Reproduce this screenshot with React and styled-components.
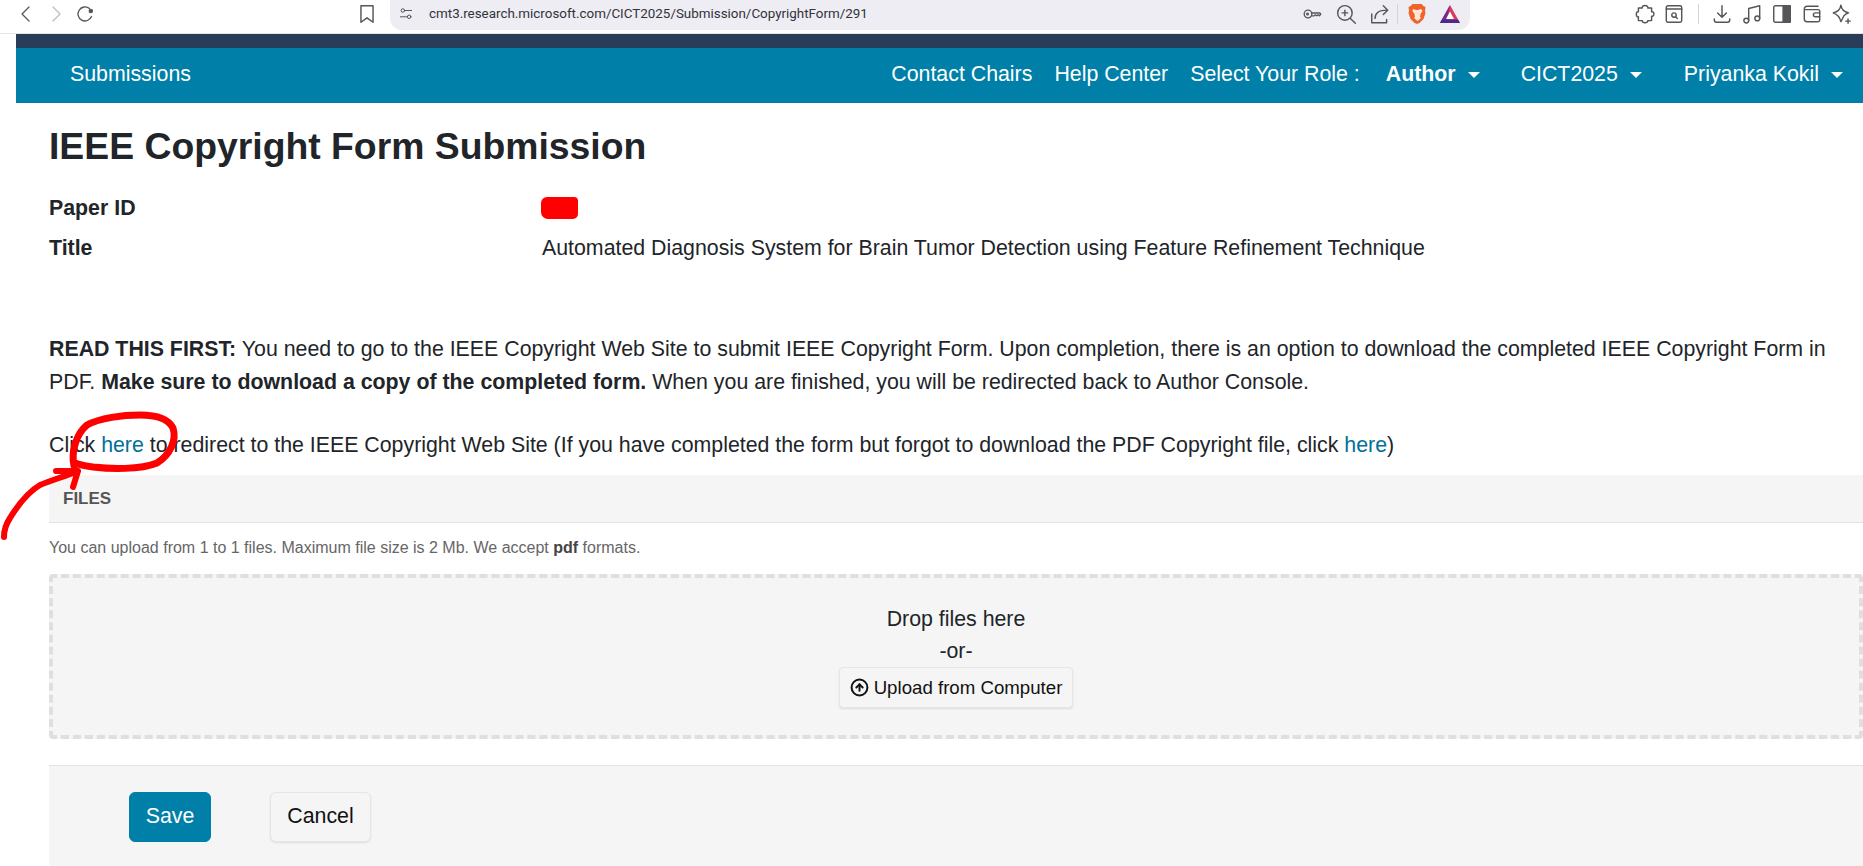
import styled, { createGlobalStyle } from 'styled-components';
import { CircleArrowUp } from 'lucide-react';

const GlobalStyle = createGlobalStyle`
  html, body {
    margin: 0;
    height: 866px;
    overflow: hidden;
    background: #fff;
    font-family: "Liberation Sans", Arial, sans-serif;
    color: #212529;
  }
`;

const Page = styled.div`
  position: relative;
  width: 1863px;
  height: 866px;
  overflow: hidden;
`;

// Browser chrome
const Toolbar = styled.div`
  height: 34px;
  display: flex;
  align-items: flex-start;
  padding-left: 11px;
  box-sizing: border-box;
  border-bottom: 1px solid #e4e4e7;
`;

const ToolIcon = styled.span`
  width: 30px;
  height: 28px;
  margin-left: ${({ $ml }) => $ml || 0}px;
  flex: none;
  display: flex;
  align-items: center;
  justify-content: center;
  color: ${({ $faded }) => ($faded ? '#bdbdc0' : '#55555a')};
`;

const Glyph = styled.svg.attrs({ viewBox: '0 0 20 20' })`
  width: ${({ $size }) => $size || 20}px;
  height: ${({ $size }) => $size || 20}px;
  fill: none;
  stroke: currentColor;
  stroke-width: 1.3;
  stroke-linecap: round;
  stroke-linejoin: round;
`;

const UrlBar = styled.div`
  width: 1080px;
  height: 30px;
  margin-left: 8px;
  padding-left: 9px;
  box-sizing: border-box;
  flex: none;
  display: flex;
  align-items: flex-start;
  background: #ededf3;
  border-radius: 0 0 12px 12px;
`;

const TuneBox = styled.span`
  width: 14px;
  height: 28px;
  flex: none;
  display: flex;
  align-items: center;
  color: #44444a;
`;

const UrlText = styled.span`
  font-family: "Roboto", "Liberation Sans", sans-serif;
  font-size: 13.4px;
  line-height: 28px;
  color: #33333a;
  margin-left: 16px;
  width: 611px;
  flex: none;
`;

const Divider = styled.span`
  width: 1px;
  height: 20px;
  margin: 4px ${({ $mr }) => $mr || 0}px 0 ${({ $ml }) => $ml || 0}px;
  background: #d4d4d8;
  flex: none;
`;

const ExtIcons = styled.div`
  margin-left: 160px;
  display: flex;
  align-items: flex-start;
`;

// Site navigation
const TopStrip = styled.div`
  height: 14px;
  margin-left: 16px;
  background: #293d58;
`;

const NavBar = styled.nav`
  height: 55px;
  margin-left: 16px;
  padding: 0 20px 2px 54px;
  box-sizing: border-box;
  display: flex;
  align-items: center;
  justify-content: space-between;
  background: #0080a8;
  color: #fff;
  font-size: 21.33px;
`;

const NavGroup = styled.div`
  display: flex;
  align-items: center;
`;

const NavItem = styled.span`
  margin-left: ${({ $ml }) => $ml || 0}px;
  font-weight: ${({ $bold }) => ($bold ? 700 : 400)};
  white-space: nowrap;
`;

const Caret = styled.span`
  display: inline-block;
  margin-left: 12px;
  border-left: 6px solid transparent;
  border-right: 6px solid transparent;
  border-top: 6px solid #fff;
  vertical-align: 3px;
`;

// Page body
const Content = styled.main`
  padding-left: 49px;
`;

const Heading = styled.h1`
  margin: 0;
  padding-top: 19px;
  font-size: 37.33px;
  line-height: 48px;
  font-weight: 700;
  color: #212529;
`;

const InfoGrid = styled.div`
  margin-top: 18px;
  display: grid;
  grid-template-columns: 493px 1fr;
  grid-auto-rows: 40px;
  font-size: 21.33px;
  align-items: center;
`;

const InfoLabel = styled.div`
  font-weight: 700;
`;

const Redaction = styled.span`
  display: block;
  width: 37px;
  height: 22px;
  margin-left: -1px;
  background: #fe0000;
  border-radius: 6px 4px 5px 7px;
`;

const Notice = styled.p`
  margin: 65px 24px 0 0;
  font-size: 21.33px;
  line-height: 33px;
`;

const ClickLine = styled.p`
  margin: 30px 0 0;
  font-size: 21.33px;
  line-height: 33px;
`;

const TextLink = styled.a`
  color: #00709a;
  text-decoration: none;
`;

const SectionBar = styled.div`
  margin-top: 13px;
  height: 48px;
  box-sizing: border-box;
  padding-left: 14px;
  display: flex;
  align-items: center;
  background: #f5f5f5;
  border-bottom: 1px solid #e3e3e3;
  font-size: 17px;
  font-weight: 700;
  color: #555;
`;

const Hint = styled.p`
  margin: 16px 0 0;
  font-size: 16px;
  line-height: 18px;
  color: #666;

  b {
    color: #444;
  }
`;

const DropZone = styled.div`
  margin-top: 17px;
  height: 165px;
  box-sizing: border-box;
  padding-top: 25px;
  display: flex;
  flex-direction: column;
  align-items: center;
  background: #f5f5f5;
  border: 4px dashed #dfdfdf;
  border-radius: 4px;
  font-size: 21.33px;
`;

const DropLine = styled.div`
  line-height: 32px;
`;

const UploadButton = styled.button`
  width: 234px;
  height: 41px;
  display: flex;
  align-items: center;
  justify-content: center;
  gap: 5px;
  padding: 0;
  background: #f5f5f5;
  border: 1px solid #e6e6e6;
  border-radius: 4px;
  box-shadow: 0 1px 2px rgba(0, 0, 0, 0.1);
  color: #111;
  font-family: inherit;
  font-size: 18.67px;
`;

const Footer = styled.footer`
  margin-top: 26px;
  height: 120px;
  padding: 26px 0 0 80px;
  box-sizing: border-box;
  display: flex;
  align-items: flex-start;
  gap: 59px;
  background: #f5f5f5;
  border-top: 1px solid #e3e3e3;
`;

const Button = styled.button`
  height: 50px;
  padding: 0 0 2px;
  border-radius: 6px;
  font-family: inherit;
  font-size: 21.33px;
`;

const SaveButton = styled(Button)`
  width: 82px;
  background: #0080a8;
  border: 1px solid #0080a8;
  color: #fff;
`;

const CancelButton = styled(Button)`
  width: 101px;
  background: #f5f5f5;
  border: 1px solid #e6e6e6;
  box-shadow: 0 1px 2px rgba(0, 0, 0, 0.1);
  color: #111;
`;

// Hand-drawn red annotation on top of the page
const Annotation = styled.svg`
  position: absolute;
  left: 0;
  top: 410px;
  pointer-events: none;
`;

const BackIcon = () => (
  <Glyph><path d="M13 3L6 10l7 7" /></Glyph>
);

const ForwardIcon = () => (
  <Glyph><path d="M7 3l7 7-7 7" /></Glyph>
);

const ReloadIcon = () => (
  <Glyph>
    <path d="M16.5 12.5A7 7 0 1 1 14.5 4.6" />
    <circle cx="15.8" cy="7" r="1.6" fill="currentColor" />
  </Glyph>
);

const BookmarkIcon = () => (
  <Glyph $size={22}><path d="M4.5 2.5h11v15L10 13.5l-5.5 4z" /></Glyph>
);

const TuneIcon = () => (
  <Glyph $size={16}>
    <circle cx="5.5" cy="5" r="2.5" />
    <path d="M8 5h10M2 14h9.5" />
    <circle cx="14.5" cy="14" r="2.5" />
  </Glyph>
);

const KeyIcon = () => (
  <Glyph>
    <circle cx="6" cy="10" r="3.8" />
    <circle cx="5.5" cy="10" r="0.9" />
    <path d="M9.8 9h8l1 1.2-1.5 1.6-1.3-1-1.3 1-1.3-1-1.2 1H9.8" />
  </Glyph>
);

const ZoomIcon = () => (
  <Glyph $size={22}>
    <circle cx="9" cy="9" r="6.6" />
    <path d="M14 14l4.5 4.5M9 6.5v5M6.5 9h5" />
  </Glyph>
);

const ShareIcon = () => (
  <Glyph $size={22}>
    <path d="M2.5 10v8h13.5v-3" />
    <path d="M5.5 14c0-5 3.5-7.5 11-7.5" />
    <path d="M13 2.5l4 4-4 4" />
  </Glyph>
);

const BraveIcon = () => (
  <svg width="18" height="22" viewBox="0 0 18 22">
    <path d="M4.5 1h9l2 2 2 1-.5 4 .5 2-2 6-4 4-2.500 1-2.500-1-4-4-2-6 .5-2-.5-4 2-1z" fill="#f0642c" />
    <path d="M5 6l3 1h2l3-1 1.500 2-2 3-.5 3 1 1-3.500 3-3.500-3 1-1-.5-3-2-3z" fill="#ffe6d6" />
  </svg>
);

const TriangleIcon = () => (
  <svg width="22" height="20" viewBox="0 0 22 20">
    <path d="M11 1l10 18H1z" fill="#d93a5e" />
    <path d="M11 1L1 19h6z" fill="#6b2f91" />
    <path d="M1 19h20l-2-3.500H3z" fill="#4b2a8c" />
    <path d="M11 7.500l4 7.500H7z" fill="#fff" />
  </svg>
);

const PuzzleIcon = () => (
  <Glyph $size={22}>
    <path d="M7.500 4.500C6.500 1.500 13.500 1.500 12.500 4.500H16V8C18.800 7 18.800 13 16 12V16H12.500C13.500 18.500 6.500 18.500 7.500 16H4V12.500C1.500 13.500 1.500 7 4 8V4.500Z" />
  </Glyph>
);

const ReaderIcon = () => (
  <Glyph $size={22}>
    <rect x="3" y="2.500" width="14" height="15" rx="1.500" />
    <path d="M3 5.500h14M11.500 12.500l1.500 1.500" />
    <circle cx="10" cy="11" r="2" />
  </Glyph>
);

const DownloadIcon = () => (
  <Glyph $size={22}>
    <path d="M10 2.500v10M6 9l4 4 4-4M3 14.500v1a2 2 0 0 0 2 2h10a2 2 0 0 0 2-2v-1" />
  </Glyph>
);

const MusicIcon = () => (
  <Glyph $size={22}>
    <path d="M7 16V5l10-2.500V14" />
    <circle cx="4.800" cy="16" r="2.200" />
    <circle cx="14.800" cy="14" r="2.200" />
  </Glyph>
);

const PanelIcon = () => (
  <Glyph $size={22}>
    <rect x="2.500" y="2.500" width="15" height="15" rx="1.500" />
    <rect x="11" y="2.500" width="6.500" height="15" fill="currentColor" />
  </Glyph>
);

const WalletIcon = () => (
  <Glyph $size={22}>
    <path d="M15.500 3h-10A2.500 2.500 0 0 0 3 5.500v9A2.500 2.500 0 0 0 5.500 17h10a1.500 1.500 0 0 0 1.500-1.500v-8A1.500 1.500 0 0 0 15.500 6H3" />
    <path d="M17 9h-4a1.500 1.500 0 0 0 0 3.500h4" />
  </Glyph>
);

const SparkleIcon = () => (
  <Glyph $size={22}>
    <path d="M9 2c.5 4 2.500 6 7 7-2 .5-3.500 1.500-4.500 3L9 17c-1-4-2.500-6.500-7-8 4.500-1 6.500-3 7-7z" />
    <path d="M15.500 14.500v4M13.500 16.500h4" />
  </Glyph>
);

export default function App() {
  return (
    <Page>
      <GlobalStyle />
      <Toolbar>
        <ToolIcon><BackIcon /></ToolIcon>
        <ToolIcon $faded><ForwardIcon /></ToolIcon>
        <ToolIcon $ml={-1}><ReloadIcon /></ToolIcon>
        <ToolIcon $ml={252}><BookmarkIcon /></ToolIcon>
        <UrlBar>
          <TuneBox><TuneIcon /></TuneBox>
          <UrlText>cmt3.research.microsoft.com/CICT2025/Submission/CopyrightForm/291</UrlText>
          <ToolIcon $ml={257}><KeyIcon /></ToolIcon>
          <ToolIcon $ml={4}><ZoomIcon /></ToolIcon>
          <ToolIcon $ml={4}><ShareIcon /></ToolIcon>
          <Divider $ml={2} $mr={4} />
          <ToolIcon><BraveIcon /></ToolIcon>
          <ToolIcon $ml={3}><TriangleIcon /></ToolIcon>
        </UrlBar>
        <ExtIcons>
          <ToolIcon><PuzzleIcon /></ToolIcon>
          <ToolIcon $ml={-1}><ReaderIcon /></ToolIcon>
          <Divider $ml={9} $mr={8} />
          <ToolIcon><DownloadIcon /></ToolIcon>
          <ToolIcon><MusicIcon /></ToolIcon>
          <ToolIcon><PanelIcon /></ToolIcon>
          <ToolIcon><WalletIcon /></ToolIcon>
          <ToolIcon><SparkleIcon /></ToolIcon>
        </ExtIcons>
      </Toolbar>

      <TopStrip />
      <NavBar>
        <NavItem>Submissions</NavItem>
        <NavGroup>
          <NavItem>Contact Chairs</NavItem>
          <NavItem $ml={22}>Help Center</NavItem>
          <NavItem $ml={22}>Select Your Role :</NavItem>
          <NavItem $ml={26} $bold>Author<Caret /></NavItem>
          <NavItem $ml={41}>CICT2025<Caret /></NavItem>
          <NavItem $ml={42}>Priyanka Kokil<Caret /></NavItem>
        </NavGroup>
      </NavBar>

      <Content>
        <Heading>IEEE Copyright Form Submission</Heading>
        <InfoGrid>
          <InfoLabel>Paper ID</InfoLabel>
          <div><Redaction /></div>
          <InfoLabel>Title</InfoLabel>
          <div>Automated Diagnosis System for Brain Tumor Detection using Feature Refinement Technique</div>
        </InfoGrid>
        <Notice>
          <b>READ THIS FIRST:</b> You need to go to the IEEE Copyright Web Site to submit IEEE Copyright Form. Upon completion, there is an option to download the completed IEEE Copyright Form in PDF. <b>Make sure to download a copy of the completed form.</b> When you are finished, you will be redirected back to Author Console.
        </Notice>
        <ClickLine>
          Click <TextLink>here</TextLink> to redirect to the IEEE Copyright Web Site (If you have completed the form but forgot to download the PDF Copyright file, click <TextLink>here</TextLink>)
        </ClickLine>
        <SectionBar>FILES</SectionBar>
        <Hint>You can upload from 1 to 1 files. Maximum file size is 2 Mb. We accept <b>pdf</b> formats.</Hint>
        <DropZone>
          <DropLine>Drop files here</DropLine>
          <DropLine>-or-</DropLine>
          <UploadButton>
            <CircleArrowUp size={19} strokeWidth={2.5} />
            Upload from Computer
          </UploadButton>
        </DropZone>
        <Footer>
          <SaveButton>Save</SaveButton>
          <CancelButton>Cancel</CancelButton>
        </Footer>
      </Content>

      <Annotation width="180" height="135" viewBox="0 410 180 135">
        <path
          d="M74 466C71 452 76 434 87 425C100 418 122 415 140 415C155 415 168 418 173 428C177 440 170 455 157 463C140 470 110 469 93 467C86 466 80 465 75 463"
          fill="none"
          stroke="#fe0000"
          strokeWidth="7"
          strokeLinecap="round"
        />
        <path
          d="M4 537C4 530 6 524 10 518C18 505 28 492 40 485C52 480 66 476 78 471M56 471H78L73 487"
          fill="none"
          stroke="#fe0000"
          strokeWidth="6"
          strokeLinecap="round"
          strokeLinejoin="round"
        />
      </Annotation>
    </Page>
  );
}
